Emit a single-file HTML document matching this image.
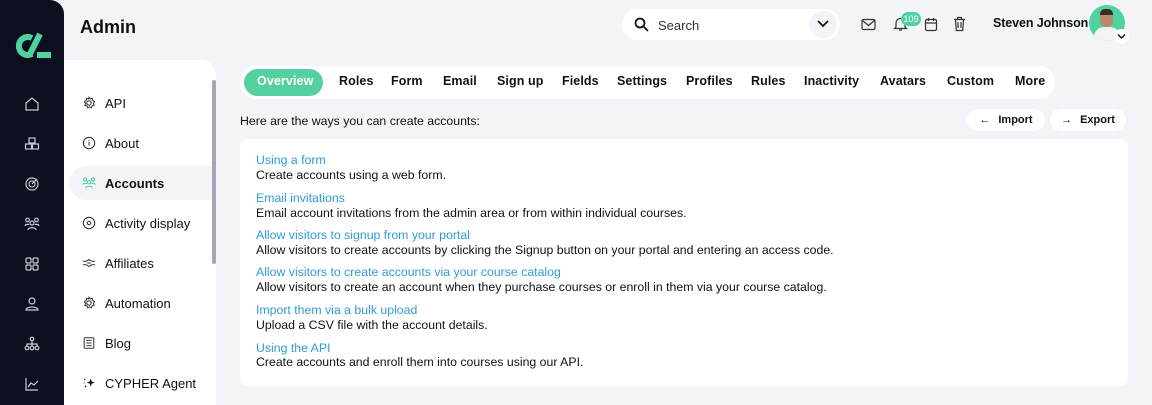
<!DOCTYPE html>
<html><head><meta charset="utf-8"><style>
*{margin:0;padding:0;box-sizing:border-box}
body{width:1152px;height:405px;overflow:hidden;background:#f3f4f8;font-family:"Liberation Sans",sans-serif;color:#111;position:relative}
.abs{position:absolute}
.side{left:0;top:0;width:64px;height:405px;background:#0b0f1f;border-top-right-radius:14px}
.side svg{position:absolute;left:24px}
.sub{left:64px;top:60px;width:152px;height:345px;background:#fff;border-top-right-radius:16px}
.item{position:absolute;left:5px;width:147px;height:34px;font-size:13px;font-weight:500;display:flex;align-items:center;padding-left:13px;gap:9px;color:#111}
.item svg{width:14px;height:14px}
.item.act{background:#f3f4f8;border-radius:17px 0 0 17px;font-weight:bold}
.tabs{left:240px;top:66px;width:815px;height:33px;background:#fff;border-radius:17px}
.tab{position:absolute;top:74px;font-size:12.5px;font-weight:bold;color:#111;letter-spacing:.1px}
.card{left:240px;top:139px;width:888px;height:247px;background:#fff;border-radius:8px}
.l{position:absolute;left:256px;font-size:12.3px;color:#2f9bd8}
.d{position:absolute;left:256px;font-size:12.3px;color:#111}
.btn{top:109px;height:22px;background:#fff;border-radius:11px;font-size:11px;font-weight:bold;display:flex;align-items:center;justify-content:center;gap:8px}
</style></head><body>
<div class="abs side">
<svg style="left:12px;top:32px" width="40" height="28" viewBox="0 0 40 28"><path d="M20 6 A9 9 0 1 0 20 22" fill="none" stroke="#4fd1a0" stroke-width="6"/><path d="M28 2 L17 24" stroke="#4fd1a0" stroke-width="6"/><rect x="25" y="20" width="14" height="6" fill="#4fd1a0"/></svg>
<svg style="top:96px" width="16" height="16" viewBox="0 0 16 16" fill="none" stroke="#c8ccd8" stroke-width="1.2"><path d="M2 7 8 2 14 7V14H2Z"/></svg>
<svg style="top:136px" width="16" height="16" viewBox="0 0 16 16" fill="none" stroke="#c8ccd8" stroke-width="1.2"><rect x="5" y="2" width="6" height="5"/><rect x="1.5" y="8" width="6" height="5"/><rect x="8.5" y="8" width="6" height="5"/></svg>
<svg style="top:176px" width="16" height="16" viewBox="0 0 16 16" fill="none" stroke="#c8ccd8" stroke-width="1.2"><circle cx="8" cy="8" r="6"/><circle cx="8" cy="8" r="3"/><path d="M8 8 13 3"/></svg>
<svg style="top:216px" width="16" height="16" viewBox="0 0 16 16" fill="none" stroke="#c8ccd8" stroke-width="1.2"><circle cx="3.5" cy="4" r="1.8"/><circle cx="12.5" cy="4" r="1.8"/><circle cx="8" cy="7" r="2"/><path d="M4 14c0-3 8-3 8 0M1 10c0-2 4-2 4-1M15 10c0-2-4-2-4-1"/></svg>
<svg style="top:256px" width="16" height="16" viewBox="0 0 16 16" fill="none" stroke="#c8ccd8" stroke-width="1.2"><rect x="2" y="2" width="5" height="5" rx="1"/><rect x="9" y="2" width="5" height="5" rx="1"/><rect x="2" y="9" width="5" height="5" rx="1"/><rect x="9" y="9" width="5" height="5" rx="1"/></svg>
<svg style="top:296px" width="16" height="16" viewBox="0 0 16 16" fill="none" stroke="#c8ccd8" stroke-width="1.2"><circle cx="8" cy="5" r="3"/><path d="M2 14c0-4 12-4 12 0Z"/></svg>
<svg style="top:336px" width="16" height="16" viewBox="0 0 16 16" fill="none" stroke="#c8ccd8" stroke-width="1.2"><circle cx="8" cy="3" r="1.8"/><circle cx="3" cy="12" r="1.8"/><circle cx="8" cy="12" r="1.8"/><circle cx="13" cy="12" r="1.8"/><path d="M8 5v5M3 10V8h10v2"/></svg>
<svg style="top:376px" width="16" height="16" viewBox="0 0 16 16" fill="none" stroke="#c8ccd8" stroke-width="1.2"><path d="M2 2v12h12M4 11l3-4 3 2 4-4"/></svg>
</div>
<div class="abs" style="left:80px;top:17px;font-size:18px;font-weight:bold">Admin</div>
<div class="abs sub">
<div class="item" style="top:26px"><svg viewBox="0 0 16 16" fill="none" stroke="#333" stroke-width="1.2"><circle cx="8" cy="8" r="2.5"/><path d="M8 1.5l1.5 1.8 2.3-.5.5 2.3 2 1.4-1.2 2 .8 2.2-2.3.6-.9 2.2-2.1-1-2.1 1-.9-2.2-2.3-.6.8-2.2-1.2-2 2-1.4.5-2.3 2.3.5Z"/></svg>API</div>
<div class="item" style="top:66px"><svg viewBox="0 0 16 16" fill="none" stroke="#333" stroke-width="1.2"><circle cx="8" cy="8" r="6.5"/><path d="M8 7v4M8 4.5v1"/></svg>About</div>
<div class="item act" style="top:106px"><svg viewBox="0 0 16 16" fill="none" stroke="#4fd1a0" stroke-width="1.2"><circle cx="3.5" cy="4" r="1.8"/><circle cx="12.5" cy="4" r="1.8"/><circle cx="8" cy="7" r="2"/><path d="M4 14c0-3 8-3 8 0M1 10c0-2 4-2 4-1M15 10c0-2-4-2-4-1"/></svg>Accounts</div>
<div class="item" style="top:146px"><svg viewBox="0 0 16 16" fill="none" stroke="#333" stroke-width="1.2"><circle cx="8" cy="8" r="6.5"/><circle cx="8" cy="8" r="2"/></svg>Activity display</div>
<div class="item" style="top:186px"><svg viewBox="0 0 16 16" fill="none" stroke="#333" stroke-width="1.2"><path d="M1 6h4l3-2 3 2h4M1 10h4l3 2 3-2h4M6 8h4"/></svg>Affiliates</div>
<div class="item" style="top:226px"><svg viewBox="0 0 16 16" fill="none" stroke="#333" stroke-width="1.2"><circle cx="8" cy="8" r="2.5"/><path d="M8 1.5l1.5 1.8 2.3-.5.5 2.3 2 1.4-1.2 2 .8 2.2-2.3.6-.9 2.2-2.1-1-2.1 1-.9-2.2-2.3-.6.8-2.2-1.2-2 2-1.4.5-2.3 2.3.5Z"/></svg>Automation</div>
<div class="item" style="top:266px"><svg viewBox="0 0 16 16" fill="none" stroke="#333" stroke-width="1.2"><rect x="2.5" y="2" width="11" height="12" rx="1"/><path d="M5 5h6M5 8h6M5 11h6"/></svg>Blog</div>
<div class="item" style="top:306px"><svg viewBox="0 0 16 16" fill="#111"><path d="M10 3l1.2 3.3L14.5 7.5 11.2 8.7 10 12 8.8 8.7 5.5 7.5 8.8 6.3Z"/><circle cx="3" cy="4" r=".8"/><circle cx="4" cy="12" r="1"/><circle cx="2.5" cy="8" r=".6"/></svg>CYPHER Agent</div>
<div class="abs" style="left:148px;top:20px;width:4px;height:184px;background:#a3a7b8;border-radius:2px"></div>
</div>
<div class="abs" style="left:622px;top:9px;width:218px;height:31px;background:#fff;border-radius:16px"></div>
<svg class="abs" style="left:634px;top:17px" width="15" height="15" viewBox="0 0 15 15" fill="none" stroke="#111" stroke-width="1.8"><circle cx="6" cy="6" r="4.5"/><path d="M9.5 9.5 14 14"/></svg>
<div class="abs" style="left:658px;top:18px;font-size:13px;color:#333">Search</div>
<div class="abs" style="left:809px;top:11px;width:28px;height:27px;background:#f3f4f8;border-radius:14px"></div>
<svg class="abs" style="left:817px;top:19px" width="12" height="10" viewBox="0 0 12 10" fill="none" stroke="#111" stroke-width="1.8"><path d="M1 2l5 5 5-5"/></svg>
<svg class="abs" style="left:861px;top:18px" width="15" height="13" viewBox="0 0 15 13" fill="none" stroke="#333" stroke-width="1.2"><rect x="1" y="1.5" width="13" height="10" rx="1.5"/><path d="M1.5 2.5l6 5 6-5"/></svg>
<svg class="abs" style="left:893px;top:16px" width="15" height="16" viewBox="0 0 15 16" fill="none" stroke="#333" stroke-width="1.2"><path d="M3 11V7a4.5 4.5 0 0 1 9 0v4l1.5 1.5h-12Z"/><path d="M6 14h3"/></svg>
<div class="abs" style="left:901px;top:12px;width:20px;height:14px;background:#4fd1a0;border-radius:7px;color:#fff;font-size:9px;text-align:center;line-height:14px">109</div>
<svg class="abs" style="left:924px;top:17px" width="14" height="15" viewBox="0 0 14 15" fill="none" stroke="#333" stroke-width="1.2"><rect x="1.5" y="2.5" width="11" height="11" rx="1.5"/><path d="M1.5 6h11M4.5 1v3M9.5 1v3"/></svg>
<svg class="abs" style="left:953px;top:16px" width="13" height="16" viewBox="0 0 13 16" fill="none" stroke="#333" stroke-width="1.2"><path d="M1 3.5h11M4.5 3.5V1.5h4v2M2.5 3.5l.8 11h6.4l.8-11M5 6v6M8 6v6"/></svg>
<div class="abs" style="left:993px;top:16px;font-size:12.5px;font-weight:bold;letter-spacing:-.1px">Steven Johnson</div>
<div class="abs" style="left:1089px;top:5px;width:36px;height:36px;border-radius:50%;background:#4fd1a0;overflow:hidden"><div style="position:absolute;left:11px;top:6px;width:13px;height:16px;border-radius:6px;background:#b98a6e"></div><div style="position:absolute;left:11px;top:4px;width:13px;height:6px;border-radius:5px 5px 0 0;background:#3b2b22"></div><div style="position:absolute;left:5px;top:22px;width:26px;height:18px;border-radius:10px 10px 0 0;background:#f3f3f3"></div></div>
<div class="abs" style="left:1114px;top:29px;width:15px;height:15px;border-radius:50%;background:#fff"></div>
<svg class="abs" style="left:1117px;top:33px" width="9" height="7" viewBox="0 0 9 7" fill="none" stroke="#111" stroke-width="1.4"><path d="M1 1.5l3.5 3.5 3.5-3.5"/></svg>
<div class="abs tabs"></div>
<div class="abs" style="left:244px;top:69px;width:79px;height:27px;background:#55d0a0;border-radius:14px"></div>
<div class="tab" style="left:257px;color:#fff">Overview</div>
<div class="tab" style="left:339px">Roles</div>
<div class="tab" style="left:391px">Form</div>
<div class="tab" style="left:443px">Email</div>
<div class="tab" style="left:497px">Sign up</div>
<div class="tab" style="left:562px">Fields</div>
<div class="tab" style="left:617px">Settings</div>
<div class="tab" style="left:686px">Profiles</div>
<div class="tab" style="left:751px">Rules</div>
<div class="tab" style="left:804px">Inactivity</div>
<div class="tab" style="left:880px">Avatars</div>
<div class="tab" style="left:947px">Custom</div>
<div class="tab" style="left:1015px">More</div>
<div class="abs" style="left:240px;top:114px;font-size:12.3px">Here are the ways you can create accounts:</div>
<div class="abs btn" style="left:967px;width:78px">&#8592; <span>Import</span></div>
<div class="abs btn" style="left:1050px;width:76px">&#8594; <span>Export</span></div>
<div class="abs card"></div>
<div class="l" style="top:153px">Using a form</div>
<div class="d" style="top:168px">Create accounts using a web form.</div>
<div class="l" style="top:191px">Email invitations</div>
<div class="d" style="top:206px">Email account invitations from the admin area or from within individual courses.</div>
<div class="l" style="top:228px">Allow visitors to signup from your portal</div>
<div class="d" style="top:243px">Allow visitors to create accounts by clicking the Signup button on your portal and entering an access code.</div>
<div class="l" style="top:265px">Allow visitors to create accounts via your course catalog</div>
<div class="d" style="top:280px">Allow visitors to create an account when they purchase courses or enroll in them via your course catalog.</div>
<div class="l" style="top:303px">Import them via a bulk upload</div>
<div class="d" style="top:318px">Upload a CSV file with the account details.</div>
<div class="l" style="top:341px">Using the API</div>
<div class="d" style="top:355px">Create accounts and enroll them into courses using our API.</div>
</body></html>
